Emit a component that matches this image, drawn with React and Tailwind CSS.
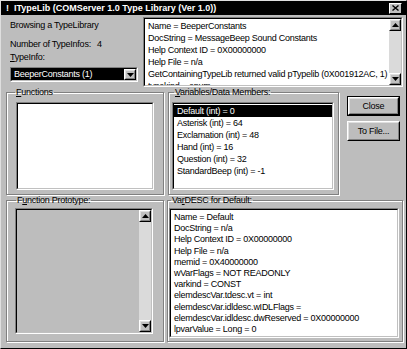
import React from "react";

function Tri({ down }) {
  return (
    <svg width="7" height="4" viewBox="0 0 7 4" className="block">
      {down ? <polygon points="0,0 7,0 3.5,4" fill="#000" /> : <polygon points="0,4 7,4 3.5,0" fill="#000" />}
    </svg>
  );
}

function ArrowBtn({ down, h = "h-[12px]" }) {
  return (
    <div className={`w-full ${h} shrink-0 border border-t-white border-l-white border-b-black border-r-black`}>
      <div className="w-full h-full border border-t-[#dfdfdf] border-l-[#dfdfdf] border-b-[#808080] border-r-[#808080] bg-[#c0c0c0] flex items-center justify-center">
        <Tri down={down} />
      </div>
    </div>
  );
}

function ScrollBar() {
  return (
    <div className="w-[12px] h-full flex flex-col shrink-0">
      <ArrowBtn />
      <div className="flex-1 bg-[#dadada]" />
      <ArrowBtn down />
    </div>
  );
}

function Sunken({ className = "", inner = "bg-white", children }) {
  return (
    <div className={`border border-t-[#808080] border-l-[#808080] border-b-white border-r-white ${className}`}>
      <div className={`w-full h-full border border-t-black border-l-black border-b-[#c0c0c0] border-r-[#c0c0c0] ${inner}`}>
        {children}
      </div>
    </div>
  );
}

function Button({ children, className = "", def }) {
  return (
    <div className={`${def ? "border border-black" : ""} ${className}`}>
      <div className="w-full h-full border border-t-white border-l-white border-b-black border-r-black">
        <div className="w-full h-full border border-t-[#dfdfdf] border-l-[#dfdfdf] border-b-[#808080] border-r-[#808080] flex items-center justify-center">
          {children}
        </div>
      </div>
    </div>
  );
}

function Group({ label, className = "", legendClass = "ml-[8px]", children }) {
  return (
    <fieldset className={`border border-[#808080] shadow-[inset_1px_1px_0_#fff,1px_1px_0_#fff] ${className}`}>
      <legend className={`${legendClass} px-[1px] leading-[11px]`}>{label}</legend>
      {children}
    </fieldset>
  );
}

const topLines = [
  "Name = BeeperConstants",
  "DocString = MessageBeep Sound Constants",
  "Help Context ID = 0X00000000",
  "Help File = n/a",
  "GetContainingTypeLib returned valid pTypelib (0X001912AC, 1)",
  "typekind = enum",
];

const vars = [
  "Default (int) = 0",
  "Asterisk (int) = 64",
  "Exclamation (int) = 48",
  "Hand (int) = 16",
  "Question (int) = 32",
  "StandardBeep (int) = -1",
];

const desc = [
  "Name = Default",
  "DocString = n/a",
  "Help Context ID = 0X00000000",
  "Help File = n/a",
  "memid = 0X40000000",
  "wVarFlags = NOT READONLY",
  "varkind = CONST",
  "elemdescVar.tdesc.vt = int",
  "elemdescVar.idldesc.wIDLFlags =",
  "elemdescVar.idldesc.dwReserved = 0X00000000",
  "lpvarValue = Long = 0",
];

export default function App() {
  return (
    <div className="w-[407px] h-[349px] bg-[#bdbdbd] text-black font-['Liberation_Sans',Arial,sans-serif] text-[9px] tracking-[-0.25px] leading-[11px] overflow-hidden border border-t-[#dfdfdf] border-l-[#dfdfdf] border-b-black border-r-black flex flex-col">
      {/* Title bar */}
      <div className="h-[14px] bg-black flex items-center shrink-0">
        <span className="ml-[5px] text-white font-bold text-[9px] tracking-normal">!</span>
        <span className="ml-[5px] text-white font-bold text-[9px] tracking-normal whitespace-nowrap">
          ITypeLib (COMServer 1.0 Type Library (Ver 1.0))
        </span>
        <div className="ml-auto mr-[4px] w-[13px] h-[11px] border border-t-white border-l-white border-b-black border-r-black bg-[#c0c0c0] flex items-center justify-center">
          <svg width="7" height="6" viewBox="0 0 7 6" className="block">
            <path d="M0.5 0.5 L6.5 5.5 M6.5 0.5 L0.5 5.5" stroke="#000" strokeWidth="1.4" />
          </svg>
        </div>
      </div>

      {/* Top row */}
      <div className="flex h-[72px] shrink-0">
        <div className="ml-[9px] w-[128px] flex flex-col">
          <div className="mt-[5px]">Browsing a TypeLibrary</div>
          <div className="mt-[8px] flex">
            <span>Number of TypeInfos:</span>
            <span className="ml-[6px]">4</span>
          </div>
          <div className="mt-[2px]">
            <span className="underline">T</span>ypeInfo:
          </div>
          <Sunken className="mt-[4px] h-[15px] w-[128px]" inner="bg-white flex">
            <div className="flex-1 bg-black text-white pl-[2px] leading-[11px]">BeeperConstants (1)</div>
            <div className="w-[12px] h-full">
              <ArrowBtn down h="h-full" />
            </div>
          </Sunken>
        </div>
        <Sunken className="ml-[5px] mt-[2px] w-[260px] h-[70px]" inner="bg-white flex overflow-hidden">
          <div className="flex-1 pl-[3px] pt-[1px] leading-[12px] whitespace-nowrap overflow-hidden">
            {topLines.map((l) => (
              <div key={l}>{l}</div>
            ))}
          </div>
          <ScrollBar />
        </Sunken>
      </div>

      {/* Middle row */}
      <div className="flex h-[108px] shrink-0">
        <Group
          className="ml-[5px] w-[158px] h-[108px]"
          label={
            <span>
              <span className="underline">F</span>unctions
            </span>
          }
        >
          <Sunken className="ml-[9px] mt-[4px] w-[138px] h-[88px]" />
        </Group>
        <Group
          className="ml-[4px] w-[171px] h-[108px]"
          legendClass="ml-[5px]"
          label={
            <span>
              <span className="underline">V</span>ariables/Data Members:
            </span>
          }
        >
          <Sunken className="ml-[3px] mt-[4px] w-[162px] h-[88px]" inner="bg-white pt-[1px] overflow-hidden">
            {vars.map((v, i) => (
              <div key={v} className={`pl-[3px] leading-[12px] ${i === 0 ? "bg-black text-white" : ""}`}>
                {v}
              </div>
            ))}
          </Sunken>
        </Group>
        <div className="ml-[8px] w-[53px] flex flex-col">
          <Button def className="mt-[9px] h-[20px]">Close</Button>
          <Button className="mt-[5px] h-[20px]">To File...</Button>
        </div>
      </div>

      {/* Bottom row */}
      <div className="flex h-[148px] shrink-0">
        <Group
          className="ml-[5px] w-[158px] h-[147px]"
          legendClass="ml-[9px]"
          label={
            <span>
              F<span className="underline">u</span>nction Prototype:
            </span>
          }
        >
          <Sunken className="ml-[8px] mt-[2px] w-[138px] h-[126px]" inner="bg-[#bdbdbd] flex justify-end">
            <ScrollBar />
          </Sunken>
        </Group>
        <Group
          className="ml-[3px] w-[236px] h-[147px]"
          legendClass="ml-[3px]"
          label={
            <span>
              Va<span className="underline">r</span>DESC for Default:
            </span>
          }
        >
          <Sunken className="ml-[1px] mt-[2px] w-[230px] h-[130px]" inner="bg-white pl-[3px] pt-[2px] leading-[11.2px] whitespace-nowrap overflow-hidden">
            {desc.map((d) => (
              <div key={d}>{d}</div>
            ))}
          </Sunken>
        </Group>
      </div>
    </div>
  );
}
